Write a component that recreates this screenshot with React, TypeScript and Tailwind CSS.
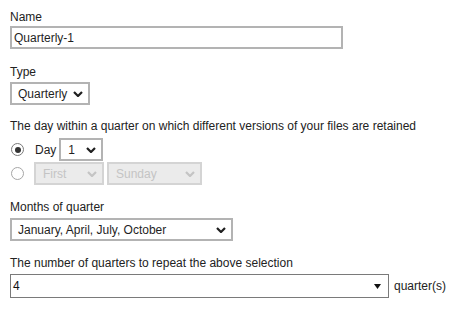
import type { ReactNode } from "react";

const Chevron = ({ className = "" }: { className?: string }) => (
  <svg width="10" height="6" viewBox="0 0 10 6" className={className}>
    <path d="M1 1 L5 5 L9 1" fill="none" stroke="currentColor" strokeWidth="2.2" />
  </svg>
);

type SelectProps = {
  value: string;
  width: string;
  disabled?: boolean;
  pad?: string;
};

const FakeSelect = ({ value, width, disabled = false, pad = "pl-[6px]" }: SelectProps) => (
  <div
    className={`flex h-[23px] items-center justify-between border-2 pr-[5px] ${pad} ${width} ${
      disabled
        ? "border-[#d4d4d4] bg-[#ebebeb] text-[#c4c4c4]"
        : "border-[#b3b3b3] bg-white text-[#1f1f1f]"
    }`}
  >
    <span>{value}</span>
    <Chevron className={disabled ? "text-[#c4c4c4]" : "text-[#1f1f1f]"} />
  </div>
);

const Radio = ({ checked }: { checked?: boolean }) => (
  <span
    className={`flex h-[13px] w-[13px] items-center justify-center rounded-full border ${
      checked ? "border-[#7a7a7a]" : "border-[#a6a6a6]"
    } bg-white`}
  >
    {checked ? <span className="h-[6px] w-[6px] rounded-full bg-[#333]" /> : null}
  </span>
);

const Label = ({ children, className = "" }: { children: ReactNode; className?: string }) => (
  <p className={`text-[#222] ${className}`}>{children}</p>
);

const App = () => {
  return (
    <div className="h-[310px] w-[455px] bg-white pl-[10px] pt-[10px] font-['Liberation_Sans',Arial,sans-serif] text-[12px] leading-[14px]">
      <Label>Name</Label>
      <div className="mt-[2px] flex h-[23px] w-[333px] items-center border-2 border-[#b3b3b3] pl-[2px] text-[#1f1f1f]">
        Quarterly-1
      </div>

      <Label className="mt-[16px]">Type</Label>
      <div className="mt-[3px]">
        <FakeSelect value="Quarterly" width="w-[80px]" />
      </div>

      <Label className="mt-[14px]">
        The day within a quarter on which different versions of your files are retained
      </Label>
      <div className="mt-[5px] flex items-center">
        <span className="ml-[1px]">
          <Radio checked />
        </span>
        <span className="ml-[11px] text-[#1f1f1f]">Day</span>
        <span className="ml-[3px]">
          <FakeSelect value="1" width="w-[44px]" pad="pl-[7px]" />
        </span>
      </div>
      <div className="mt-[1px] flex items-center">
        <span className="ml-[1px]">
          <Radio />
        </span>
        <span className="ml-[10px]">
          <FakeSelect value="First" width="w-[70px]" disabled pad="pl-[7px]" />
        </span>
        <span className="ml-[3px]">
          <FakeSelect value="Sunday" width="w-[95px]" disabled pad="pl-[7px]" />
        </span>
      </div>

      <Label className="mt-[15px]">Months of quarter</Label>
      <div className="mt-[4px]">
        <FakeSelect value="January, April, July, October" width="w-[223px]" />
      </div>

      <Label className="mt-[15px]">The number of quarters to repeat the above selection</Label>
      <div className="mt-[4px] flex items-center">
        <div className="flex h-[24px] w-[379px] items-center justify-between border border-[#7a7a7a] bg-white pl-[2px] pr-[7px] text-[#111]">
          <span>4</span>
          <svg width="7" height="5" viewBox="0 0 7 5">
            <path d="M0 0 L7 0 L3.5 5 Z" fill="#111" />
          </svg>
        </div>
        <span className="ml-[5px] text-[#222]">quarter(s)</span>
      </div>
    </div>
  );
};

export default App;
